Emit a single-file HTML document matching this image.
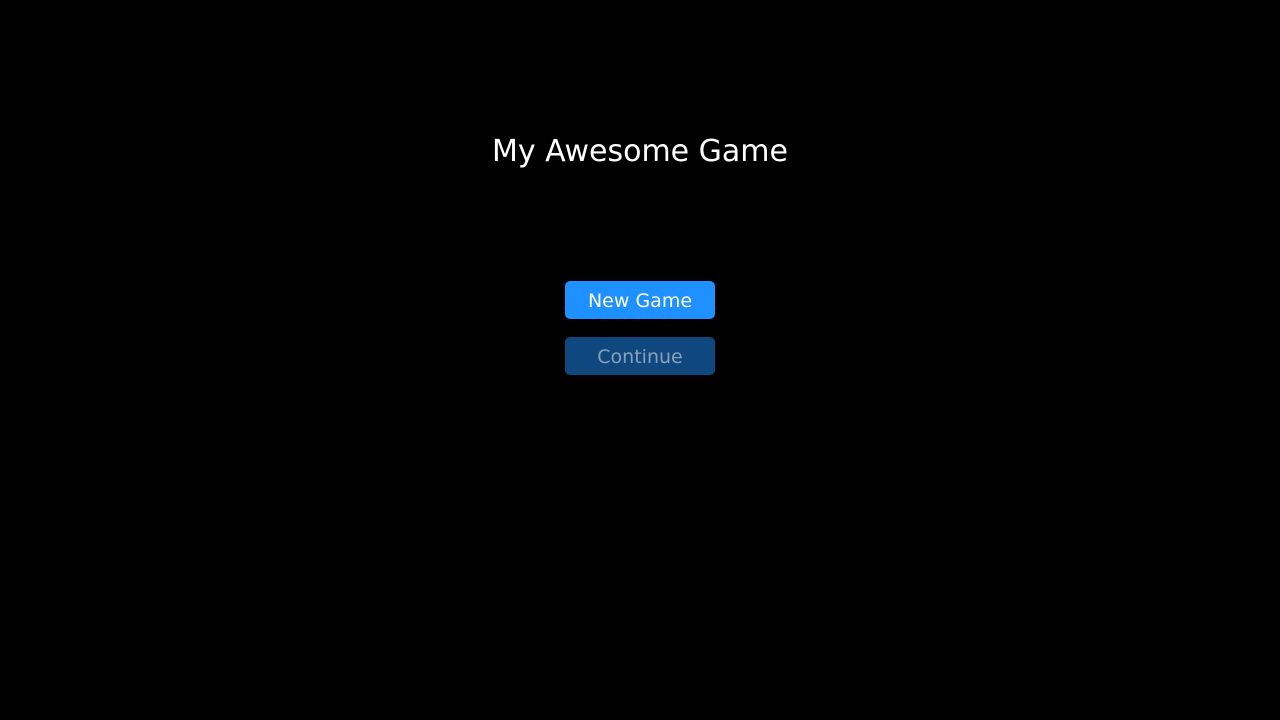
<!DOCTYPE html>
<html><head><style>
html,body{margin:0;padding:0;background:#000;width:1280px;height:720px;overflow:hidden;font-family:"DejaVu Sans","Liberation Sans",sans-serif}
.t{position:absolute;left:0;width:1280px;top:132px;text-align:center;color:#fff;font-size:30px;line-height:40px}
.b{position:absolute;left:565px;width:150px;height:38px;border-radius:5px;text-align:center;line-height:40px;font-size:19px}
.n{top:281px;background:#1e90ff;color:#fff}
.c{top:337px;background:#0f487f;color:#8aa0b8}
</style></head><body>
<div class="t">My Awesome Game</div>
<div class="b n">New Game</div>
<div class="b c">Continue</div>
</body></html>
